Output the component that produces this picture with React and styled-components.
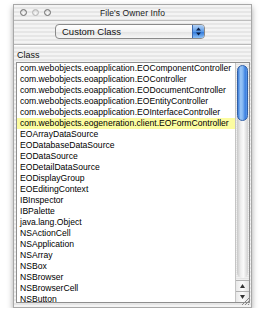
import styled, { createGlobalStyle } from 'styled-components';

const GlobalStyle = createGlobalStyle`
  html, body {
    margin: 0;
    padding: 0;
    background: #ffffff;
  }
  body {
    font-family: 'Liberation Sans', Arial, sans-serif;
    -webkit-font-smoothing: antialiased;
  }
`;

const pinstripe = `repeating-linear-gradient(
  to bottom,
  #f4f4f4 0px,
  #f4f4f4 2px,
  #e6e6e6 2px,
  #e6e6e6 4px
)`;

const Window = styled.div`
  margin: 4px 0 0 13px;
  width: 239px;
  height: 304px;
  display: flex;
  flex-direction: column;
  background: ${pinstripe};
  border: 1px solid #a8a8a8;
  box-sizing: border-box;
  box-shadow: 0 3px 6px rgba(0, 0, 0, 0.35);
`;

const TitleBar = styled.div`
  position: relative;
  height: 15px;
  display: flex;
  align-items: center;
  justify-content: center;
  border-bottom: 1px solid #bdbdbd;
`;

const Lights = styled.div`
  position: absolute;
  left: 6px;
  top: 4px;
  display: flex;
  gap: 5px;
`;

const Light = styled.span`
  width: 7px;
  height: 7px;
  border-radius: 50%;
  box-sizing: border-box;
  border: 1px solid ${({ dim }) => (dim ? '#b4b4b4' : '#6e6e6e')};
  background: radial-gradient(circle at 50% 70%, #fafafa 0%, #dedede 60%, #c0c0c0 100%);
`;

const Title = styled.div`
  font-size: 8.5px;
  color: #1a1a1a;
  letter-spacing: 0.1px;
`;

const Toolbar = styled.div`
  height: 20px;
  display: flex;
  align-items: flex-start;
  padding: 3px 0 0 41px;
  border-bottom: 1px solid #b8b8b8;
  box-shadow: 0 1px 0 #ffffff;
`;

const Popup = styled.div`
  width: 150px;
  height: 15px;
  display: flex;
  box-sizing: border-box;
  border: 1px solid #8a8a8a;
  border-radius: 4px;
  overflow: hidden;
  background: linear-gradient(to bottom, #ffffff 0%, #f2f2f2 50%, #e2e2e2 51%, #f7f7f7 100%);
`;

const PopupLabel = styled.div`
  flex: 1;
  font-size: 9.5px;
  line-height: 13px;
  padding-left: 6px;
  color: #111;
`;

const PopupArrows = styled.div`
  width: 11px;
  display: flex;
  align-items: center;
  justify-content: center;
  border-left: 1px solid #3c69b0;
  background: linear-gradient(to bottom, #b6d3f5 0%, #5a9ae8 50%, #2b74d8 51%, #8cc0f6 100%);
`;

const Label = styled.div`
  font-size: 9px;
  color: #111;
  padding: 5px 0 0 3px;
  height: 15px;
  box-sizing: border-box;
`;

const ListBox = styled.div`
  margin: 2px 1px 0 2px;
  height: 241px;
  display: flex;
  border: 1px solid #8e8e8e;
  background: #ffffff;
  box-sizing: border-box;
`;

const Rows = styled.div`
  flex: 1;
  overflow: hidden;
`;

const Row = styled.div`
  height: 11px;
  line-height: 11px;
  font-size: 8.6px;
  padding-left: 3px;
  white-space: nowrap;
  color: #000;
  background: ${({ selected }) => (selected ? '#fcfca0' : 'transparent')};
`;

const Scroller = styled.div`
  width: 13px;
  display: flex;
  flex-direction: column;
  border-left: 1px solid #c4c4c4;
  background: repeating-linear-gradient(to bottom, #f0f0f0 0, #f0f0f0 1px, #e4e4e4 1px, #e4e4e4 2px);
`;

const Track = styled.div`
  position: relative;
  flex: 1;
  margin: 2px 1px 2px 1px;
  border-radius: 6px;
  background: linear-gradient(to right, #c8c8c8 0%, #efefef 35%, #fafafa 60%, #d0d0d0 100%);
`;

const Thumb = styled.div`
  position: absolute;
  left: 0;
  right: 0;
  top: 0;
  height: 56px;
  border-radius: 6px;
  box-sizing: border-box;
  border: 1px solid #2f5fa8;
  background: linear-gradient(to right, #3d7ed8 0%, #9cc8f8 30%, #7fb4f2 55%, #3b7fe0 80%, #5e9be8 100%);
`;

const ArrowButton = styled.div`
  height: 10px;
  display: flex;
  align-items: center;
  justify-content: center;
  border-top: 1px solid #b0b0b0;
  background: linear-gradient(to right, #e8e8e8, #fbfbfb 50%, #e2e2e2);
`;

const Footer = styled.div`
  flex: 1;
  position: relative;
`;

const Grip = styled.svg`
  position: absolute;
  right: 1px;
  bottom: 1px;
`;

const classes = [
  'com.webobjects.eoapplication.EOComponentController',
  'com.webobjects.eoapplication.EOController',
  'com.webobjects.eoapplication.EODocumentController',
  'com.webobjects.eoapplication.EOEntityController',
  'com.webobjects.eoapplication.EOInterfaceController',
  'com.webobjects.eogeneration.client.EOFormController',
  'EOArrayDataSource',
  'EODatabaseDataSource',
  'EODataSource',
  'EODetailDataSource',
  'EODisplayGroup',
  'EOEditingContext',
  'IBInspector',
  'IBPalette',
  'java.lang.Object',
  'NSActionCell',
  'NSApplication',
  'NSArray',
  'NSBox',
  'NSBrowser',
  'NSBrowserCell',
  'NSButton',
];

const App = () => {
  return (
    <>
      <GlobalStyle />
      <Window>
        <TitleBar>
          <Lights>
            <Light />
            <Light dim />
            <Light />
          </Lights>
          <Title>File's Owner Info</Title>
        </TitleBar>
        <Toolbar>
          <Popup>
            <PopupLabel>Custom Class</PopupLabel>
            <PopupArrows>
              <svg width="5" height="9" viewBox="0 0 5 9">
                <path d="M0 3.5 L2.5 0.5 L5 3.5 Z" fill="#0b1f44" />
                <path d="M0 5.5 L2.5 8.5 L5 5.5 Z" fill="#0b1f44" />
              </svg>
            </PopupArrows>
          </Popup>
        </Toolbar>
        <Label>Class</Label>
        <ListBox>
          <Rows>
            {classes.map((name, i) => (
              <Row key={name} selected={i === 5}>
                {name}
              </Row>
            ))}
          </Rows>
          <Scroller>
            <Track>
              <Thumb />
            </Track>
            <ArrowButton>
              <svg width="5" height="4" viewBox="0 0 5 4">
                <path d="M0 4 L2.5 0 L5 4 Z" fill="#333" />
              </svg>
            </ArrowButton>
            <ArrowButton>
              <svg width="5" height="4" viewBox="0 0 5 4">
                <path d="M0 0 L2.5 4 L5 0 Z" fill="#333" />
              </svg>
            </ArrowButton>
          </Scroller>
        </ListBox>
        <Footer>
          <Grip width="9" height="9" viewBox="0 0 9 9">
            <path d="M8 1 L1 8 M8 4 L4 8 M8 7 L7 8" stroke="#8a8a8a" strokeWidth="1" />
          </Grip>
        </Footer>
      </Window>
    </>
  );
};

export default App;
